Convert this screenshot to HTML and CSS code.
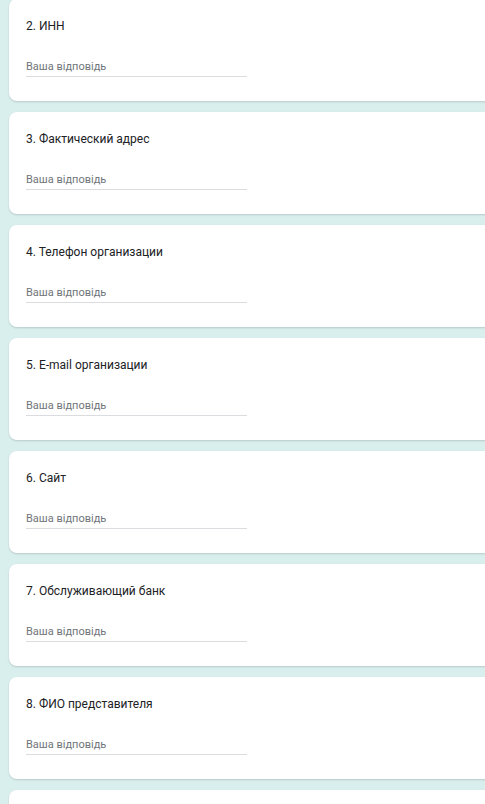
FILE: index.html
```html
<!DOCTYPE html>
<html lang="uk">
<head>
  <meta charset="UTF-8" />
  <meta name="viewport" content="width=device-width, initial-scale=1.0"/>
  <title>Анкета</title>
  <link rel="stylesheet" href="styles.css">
</head>
<body>
  <div class="form">
    <div class="question">
      <div class="title">2. ИНН</div>
      <div class="answer">Ваша відповідь</div>
    </div>
    <div class="question">
      <div class="title">3. Фактический адрес</div>
      <div class="answer">Ваша відповідь</div>
    </div>
    <div class="question">
      <div class="title">4. Телефон организации</div>
      <div class="answer">Ваша відповідь</div>
    </div>
    <div class="question">
      <div class="title">5. E-mail организации</div>
      <div class="answer">Ваша відповідь</div>
    </div>
    <div class="question">
      <div class="title">6. Сайт</div>
      <div class="answer">Ваша відповідь</div>
    </div>
    <div class="question">
      <div class="title">7. Обслуживающий банк</div>
      <div class="answer">Ваша відповідь</div>
    </div>
    <div class="question">
      <div class="title">8. ФИО представителя</div>
      <div class="answer">Ваша відповідь</div>
    </div>
    <div class="question"></div>
  </div>
</body>
</html>
```

FILE: styles.css
```css
body {
  margin: 0;
  background-color: #d9efed;
  font-family: Roboto, Arial, sans-serif;
  overflow: hidden;
}
.form {
  display: flex;
  flex-direction: column;
  gap: 11px;
  margin-top: -1px;
  padding-left: 9px;
}
.question {
  box-sizing: border-box;
  flex-shrink: 0;
  width: 620px;
  height: 102px;
  background: white;
  border-radius: 8px;
  box-shadow: 0 1px 2px rgba(0,0,0,0.15);
  padding: 18px 0 0 17px;
}
.title {
  font-size: 12px;
  line-height: 18px;
  color: #202124;
}
.answer {
  width: 221px;
  margin-top: 24px;
  font-size: 11px;
  line-height: 16px;
  color: #70757a;
  padding-bottom: 1px;
  border-bottom: 1px solid #dadce0;
}
```
